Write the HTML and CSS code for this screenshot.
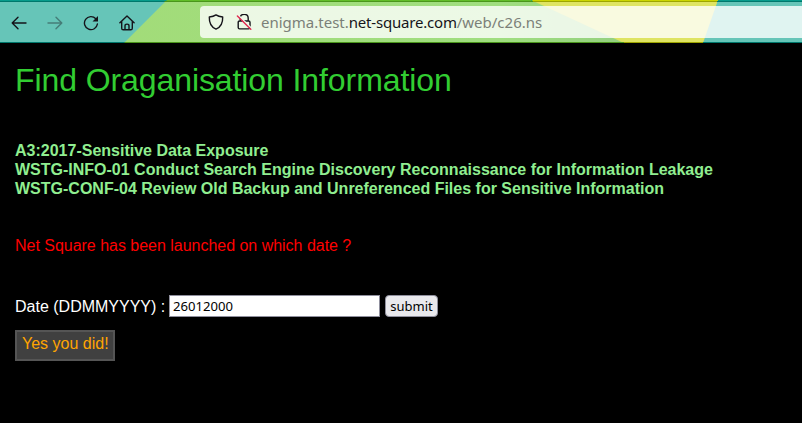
FILE: index.html
```html
<!DOCTYPE html>
<html lang="en">
<head>
<meta charset="utf-8">
<title>Find Oraganisation Information</title>
<link rel="stylesheet" href="styles.css">
</head>
<body>
<header class="toolbar">
  <svg class="theme" viewBox="0 0 802 43" preserveAspectRatio="none" aria-hidden="true">
    <defs>
      <linearGradient id="leaf"><stop offset="0" stop-color="#a2dc79"/><stop offset=".75" stop-color="#a0de80"/><stop offset="1" stop-color="#94d080"/></linearGradient>
    </defs>
    <path fill="#66c5b8" d="M0 0H802V43H0z"/>
    <path fill="url(#leaf)" d="M167 0H540L626 43H124z"/>
    <path fill="#dfe463" d="M531 0H718L703 43H624z"/>
    <path fill="#079b8b" d="M0 0H802V1H0z"/>
    <path fill="#61bd28" d="M167 0H531V1H166z"/>
    <path fill="#ccd600" d="M531 0H718V1H533z"/>
    <path fill="#00786c" d="M0 1H802V2H0zM0 42H802V43H0z"/>
    <path fill="#4a961b" d="M165 1H533V2H164zM125 42H624V43H124z"/>
    <path fill="#9da500" d="M533 1H717V2H533zM624 42H703V43H624z"/>
  </svg>
  <nav class="nav">
    <svg class="icon" viewBox="0 0 16 16"><path d="M15 8H1.2M7 2.2L1.2 8L7 13.8"/></svg>
    <svg class="icon disabled" viewBox="0 0 16 16"><path d="M1 8h13.8M9 2.2L14.8 8L9 13.8"/></svg>
    <svg class="icon" viewBox="0 0 16 16"><path d="M12.8 3.8A6.5 6.5 0 1 0 14.4 9"/><path class="solid" d="M15 1v5.5H9.5z"/></svg>
    <svg class="icon" viewBox="0 0 16 16"><path d="M.9 7.7L8 1l7.1 6.7M2.7 6.5v6.7q0 1.6 1.6 1.6h7.4q1.6 0 1.6-1.6V6.5M6 14.5v-3.7q0-1.7 2-1.7t2 1.7v3.7"/></svg>
  </nav>
  <div class="address">
    <svg class="icon" viewBox="0 0 16 16"><path d="M8 .9C6.2 2.2 3.7 2.8 1.3 3C1.1 8.5 2.8 13 8 15.1C13.2 13 14.9 8.5 14.7 3C12.3 2.8 9.8 2.2 8 .9z"/></svg>
    <svg class="icon lock" viewBox="0 0 16 16"><path d="M4.2 7V4.4Q4.2 .4 8.2 .4t4 4V7M3.6 7h9q1.4 0 1.4 1.3v5.2q0 1.4-1.4 1.4h-9q-1.4 0-1.4-1.4V8.3Q2.2 7 3.6 7z"/><path class="gap" d="M2.6 1.6L15.4 14.4"/><path class="slash" d="M1.4 2L14.8 15.2"/></svg>
    <span class="url">enigma.test.<b>net-square.com</b>/web/c26.ns</span>
  </div>
</header>
<main class="page">
  <h1>Find Oraganisation Information</h1>
  <div class="refs">
    <p>A3:2017-Sensitive Data Exposure</p>
    <p>WSTG-INFO-01 Conduct Search Engine Discovery Reconnaissance for Information Leakage</p>
    <p>WSTG-CONF-04 Review Old Backup and Unreferenced Files for Sensitive Information</p>
  </div>
  <p class="question">Net Square has been launched on which date ?</p>
  <form class="answer">
    <label for="date">Date (DDMMYYYY) :</label>
    <input id="date" type="text" value="26012000">
    <button type="button">submit</button>
  </form>
  <div class="result">Yes you did!</div>
</main>
</body>
</html>
```
FILE: styles.css
```css
* { box-sizing: border-box; }
html, body { margin: 0; background: #000; }
body {
  height: 423px;
  overflow: hidden;
  font: 16px/19px "Liberation Sans", Arial, sans-serif;
}
h1, p { margin: 0; white-space: nowrap; }

.toolbar {
  position: relative;
  display: flex;
  height: 43px;
  padding-top: 6px;
}
.theme { position: absolute; inset: 0; width: 802px; height: 43px; }
.nav {
  position: relative;
  display: flex;
  align-items: center;
  gap: 20px;
  width: 200px;
  height: 33px;
  padding-left: 11px;
}
.icon {
  flex: none;
  width: 16px;
  height: 16px;
  fill: none;
  stroke: #15141a;
  stroke-width: 1.4;
  stroke-linecap: round;
  stroke-linejoin: round;
}
.disabled { opacity: .4; }
.solid { fill: #15141a; stroke: none; }
.gap { stroke: #eff8e8; stroke-width: 1.5; }
.slash { stroke: #e22850; }
.address {
  position: relative;
  display: flex;
  flex: 1;
  align-items: center;
  height: 32px;
  padding-left: 8px;
  border-radius: 4px 0 0 4px;
  background: rgba(255, 255, 255, .8);
}
.lock { margin-left: 12px; }
.url {
  margin-left: 9px;
  color: #7b8078;
  font: 15px/20px "Noto Sans", sans-serif;
  white-space: nowrap;
}
.url b { color: #15141a; font-weight: normal; letter-spacing: -.2px; }

.page { padding: 19px 15px 0; }
h1 {
  color: #32cd32;
  font-size: 32px;
  font-weight: normal;
  line-height: 37px;
  letter-spacing: -.09px;
}
.refs { margin-top: 42px; color: #90ee90; font-weight: bold; }
.question { margin-top: 38px; color: #f00; letter-spacing: -.02px; }
.answer {
  display: flex;
  align-items: center;
  height: 22px;
  margin-top: 40px;
  color: #fff;
}
.answer label { width: 154px; white-space: nowrap; }
.answer input {
  width: 211px;
  height: 22px;
  padding: 0 3px;
  border: 1px solid #8f8f9d;
  border-radius: 0;
  background: #fff;
  color: #000;
  font: 13.1px "Noto Sans", sans-serif;
}
.answer button {
  width: 53px;
  height: 22px;
  margin-left: 5px;
  padding: 0;
  border: 1px solid #8f8f9d;
  border-radius: 4px;
  background: #e9e9ed;
  color: #000;
  font: 13px/18px "Noto Sans", sans-serif;
}
.result {
  width: 100px;
  height: 31px;
  margin-top: 13px;
  padding: 2px 0 0 5px;
  border: 2px solid #555;
  background: #404040;
  color: #ffa500;
  white-space: nowrap;
}
```
